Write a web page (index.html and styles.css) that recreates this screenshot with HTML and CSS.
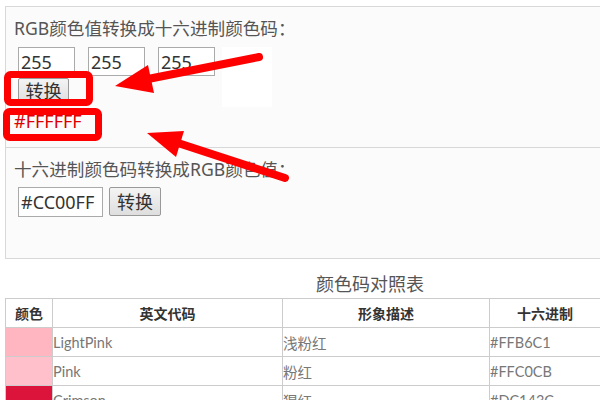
FILE: index.html
```html
<!DOCTYPE html>
<html lang="zh-CN">
<head>
  <meta charset="UTF-8" />
  <title>RGB颜色值与十六进制颜色码转换</title>
  <link rel="stylesheet" href="styles.css">
</head>
<body>
  <div class="page">
    <div class="tool-box">
      <div class="label">RGB颜色值转换成十六进制颜色码：</div>
      <div class="rgb-row">
        <div class="rgb-left">
          <div class="inputs">
            <input type="text" value="255">
            <input type="text" value="255">
            <input type="text" value="255">
          </div>
          <button class="btn">转换</button>
        </div>
        <div class="preview"></div>
      </div>
      <div class="result">#FFFFFF</div>
    </div>

    <div class="tool-box second">
      <div class="label">十六进制颜色码转换成RGB颜色值：</div>
      <div class="hex-row">
        <input type="text" class="hex-input" value="#CC00FF">
        <button class="btn">转换</button>
      </div>
    </div>

    <div class="table-title">颜色码对照表</div>
    <table class="color-table">
      <thead>
        <tr>
          <th class="col-swatch">颜色</th>
          <th class="col-name">英文代码</th>
          <th class="col-desc">形象描述</th>
          <th>十六进制</th>
        </tr>
      </thead>
      <tbody>
        <tr>
          <td style="background-color:#FFB6C1"></td>
          <td>LightPink</td>
          <td>浅粉红</td>
          <td>#FFB6C1</td>
        </tr>
        <tr>
          <td style="background-color:#FFC0CB"></td>
          <td>Pink</td>
          <td>粉红</td>
          <td>#FFC0CB</td>
        </tr>
        <tr>
          <td style="background-color:#DC143C"></td>
          <td>Crimson</td>
          <td>猩红</td>
          <td>#DC143C</td>
        </tr>
      </tbody>
    </table>
  </div>

  <!-- annotation marks drawn over the screenshot -->
  <svg class="marks" width="600" height="400" viewBox="0 0 600 400">
    <g fill="none" stroke="#f00" stroke-width="7">
      <rect x="7.5" y="74.5" width="82" height="28" rx="3"/>
      <rect x="6.5" y="111.5" width="92" height="26" rx="3"/>
    </g>
    <g stroke="#f00" stroke-width="8" stroke-linecap="round">
      <line x1="259" y1="57" x2="148" y2="79"/>
      <line x1="285" y1="178" x2="178" y2="143"/>
    </g>
    <g fill="#f00">
      <polygon points="115,86 148,65 154,93"/>
      <polygon points="147,133 184,131 176,157"/>
    </g>
  </svg>
</body>
</html>
```

FILE: styles.css
```css
* {
  box-sizing: border-box;
}

body {
  margin: 0;
  font-family: "Noto Sans", "Noto Sans CJK SC", sans-serif;
  color: #555;
  background-color: #fff;
  overflow: hidden;
}

.page {
  width: 735px;
  padding: 6px 0 0 5px;
}

.tool-box {
  background-color: #fbfbfb;
  border: 1px solid #d8d8d8;
  padding: 9px 8px 0;
  height: 142px;
}

.tool-box.second {
  border-top: none;
  height: 111px;
}

.label {
  font-size: 17.6px;
  line-height: 24px;
  height: 24px;
}

.rgb-row {
  display: flex;
  margin-top: 7px;
}

.inputs {
  display: flex;
  gap: 13px;
  padding-left: 4px;
}

input {
  width: 57px;
  height: 29px;
  padding: 0 2px;
  border: 1px solid #aaa;
  background-color: #fff;
  font-family: "Noto Sans", "Noto Sans CJK SC", sans-serif;
  font-size: 18px;
  color: #333;
}

.btn {
  height: 26px;
  width: 51px;
  margin: 2px 0 0 4px;
  padding: 0;
  border: 1px solid #999;
  border-radius: 2px;
  background: linear-gradient(#f4f4f4, #dedede);
  font-family: "Noto Sans", "Noto Sans CJK SC", sans-serif;
  font-size: 18px;
  line-height: 22px;
  color: #333;
}

.preview {
  width: 50px;
  height: 60px;
  margin-left: 7px;
  background-color: #fff;
}

.result {
  margin-top: 3px;
  font-size: 18px;
  line-height: 22px;
  color: #d00;
}

.hex-row {
  display: flex;
  align-items: flex-start;
  gap: 6px;
  padding-left: 4px;
  margin-top: 6px;
}

.hex-input {
  width: 85px;
  height: 30px;
}

.hex-row .btn {
  height: 29px;
  width: 52px;
  margin: 0;
}

.table-title {
  margin-top: 12px;
  font-size: 18px;
  line-height: 26px;
  text-align: center;
  color: #555;
}

.color-table {
  width: 596px;
  margin-top: 1px;
  border-collapse: collapse;
}

.color-table th,
.color-table td {
  border: 1px solid #ccc;
  height: 29px;
  padding: 0;
}

.color-table th {
  font-size: 14px;
  font-weight: bold;
  color: #333;
  text-align: center;
}

.color-table td {
  font-family: Lato, "Noto Sans CJK SC", sans-serif;
  font-size: 14.5px;
  color: #777;
  text-align: left;
}

.col-swatch {
  width: 47px;
}

.col-name {
  width: 230px;
}

.col-desc {
  width: 207px;
}

.marks {
  position: absolute;
  top: 0;
  left: 0;
  pointer-events: none;
}
```
